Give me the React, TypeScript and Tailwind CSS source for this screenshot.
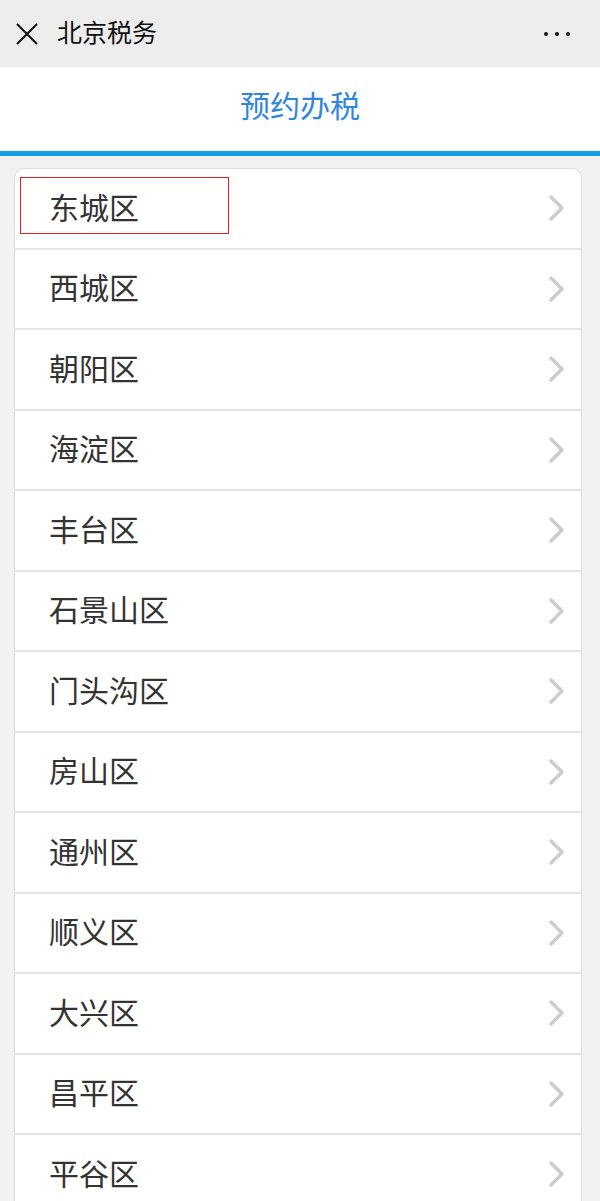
const districts = [
  "东城区",
  "西城区",
  "朝阳区",
  "海淀区",
  "丰台区",
  "石景山区",
  "门头沟区",
  "房山区",
  "通州区",
  "顺义区",
  "大兴区",
  "昌平区",
  "平谷区",
];

const font = "font-['Noto_Sans_CJK_SC','Noto_Sans',sans-serif]";

function Chevron() {
  return (
    <svg width="20" height="28" viewBox="0 0 20 28" className="shrink-0">
      <path
        d="M4 3 L15 14 L4 25"
        fill="none"
        stroke="#cccccc"
        strokeWidth="3.5"
        strokeLinecap="round"
        strokeLinejoin="round"
      />
    </svg>
  );
}

export default function App() {
  return (
    <div className={`w-[600px] h-[1201px] overflow-hidden bg-[#f2f2f2] ${font}`}>
      {/* Top bar */}
      <div className="h-[67px] bg-[#ededed] flex items-center pl-[15px] pr-[30px]">
        <svg width="24" height="24" viewBox="0 0 24 24" className="shrink-0">
          <path d="M2 2 L22 22 M22 2 L2 22" stroke="#111" strokeWidth="2" />
        </svg>
        <span className="ml-[18px] mb-[5px] text-[25px] text-[#111] leading-none">北京税务</span>
        <div className="ml-auto flex items-center gap-[7px]">
          <span className="w-[4px] h-[4px] rounded-full bg-[#111]" />
          <span className="w-[4px] h-[4px] rounded-full bg-[#111]" />
          <span className="w-[4px] h-[4px] rounded-full bg-[#111]" />
        </div>
      </div>

      {/* Header */}
      <div className="h-[84px] bg-white flex items-center justify-center">
        <span className="mb-[10px] text-[30px] text-[#2f86dc] leading-none">预约办税</span>
      </div>
      <div className="h-[5px] bg-[#0fa0e3]" />

      {/* List */}
      <div className="pt-[12px] pl-[14px] pr-[18px]">
        <div className="bg-white border border-[#dcdcdc] rounded-[10px]">
          {districts.map((d, i) => (
            <div
              key={d}
              className={`relative flex items-center pl-[34px] pr-[14px] ${
                i > 0 ? "h-[80.5px] border-t-2 border-[#e3e3e3]" : "h-[78.5px]"
              }`}
            >
              {i === 0 && (
                <div className="absolute left-[5px] top-[8px] w-[209px] h-[57px] border border-[#dd2222]" />
              )}
              <span className="mb-[5px] text-[30px] text-[#333] leading-none">{d}</span>
              <div className="ml-auto">
                <Chevron />
              </div>
            </div>
          ))}
        </div>
      </div>
    </div>
  );
}
